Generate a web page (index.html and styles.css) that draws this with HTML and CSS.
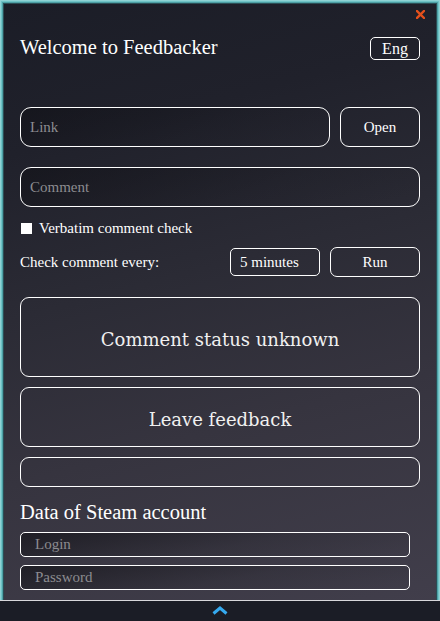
FILE: index.html
```html
<!DOCTYPE html>
<html lang="en">
<head>
<meta charset="utf-8">
<title>Feedbacker</title>
<link rel="stylesheet" href="styles.css">
</head>
<body>
<div class="window">
  <div class="close" title="Close">
    <svg width="9" height="9" viewBox="0 0 9 9"><path d="M1 1 L8 8 M8 1 L1 8" stroke="#e4501c" stroke-width="2.4" stroke-linecap="square"/></svg>
  </div>
  <div class="header">
    <h1 class="title">Welcome to Feedbacker</h1>
    <div class="btn lang">Eng</div>
  </div>
  <div class="row link-row">
    <div class="field field-link"><span class="ph">Link</span></div>
    <div class="btn btn-open">Open</div>
  </div>
  <div class="field field-comment"><span class="ph">Comment</span></div>
  <div class="check-row">
    <span class="checkbox"></span>
    <span class="check-label">Verbatim comment check</span>
  </div>
  <div class="row interval-row">
    <span class="interval-label">Check comment every:</span>
    <div class="btn select">5 minutes</div>
    <div class="btn btn-run">Run</div>
  </div>
  <div class="panel panel-status">Comment status unknown</div>
  <div class="panel panel-feedback">Leave feedback</div>
  <div class="panel panel-empty"></div>
  <h2 class="section-title">Data of Steam account</h2>
  <div class="small-field login"><span class="ph">Login</span></div>
  <div class="small-field password"><span class="ph">Password</span></div>
</div>
<div class="bottom-bar">
  <svg width="16" height="9" viewBox="0 0 16 9"><path d="M1.5 7.5 L8 2 L14.5 7.5" fill="none" stroke="#35aaf0" stroke-width="3" stroke-linejoin="miter"/></svg>
</div>
</body>
</html>
```
FILE: styles.css
```css
html, body {
  margin: 0;
  padding: 0;
}
body {
  width: 440px;
  height: 621px;
  overflow: hidden;
  background: #1b1d26;
  font-family: "Liberation Serif", "Times New Roman", serif;
  color: #ffffff;
}
.window {
  position: relative;
  height: 600px;
  box-sizing: border-box;
  padding: 0 20px;
  display: flex;
  flex-direction: column;
  background: linear-gradient(165deg, #1b1d27 0%, #20212b 22%, #2b2b35 45%, #36343f 68%, #413e4b 100%);
  box-shadow:
    inset 1px 1px 0 0 #8fd2d4,
    inset -1px 0 0 0 #8fd2d4,
    inset 2px 2px 0 0 #6ec3c6,
    inset -2px 0 0 0 #6ec3c6,
    inset 3px 3px 0 0 #4d9fa4,
    inset -3px 0 0 0 #4d9fa4,
    inset 4px 4px 0 0 #2b4e55,
    inset -4px 0 0 0 #2b4e55;
}
.close {
  position: absolute;
  top: 10px;
  left: 416px;
  width: 9px;
  height: 9px;
  line-height: 0;
}
.header {
  margin-top: 37px;
  height: 23px;
  display: flex;
  align-items: center;
  justify-content: space-between;
}
.title {
  margin: 0;
  font-size: 20.5px;
  font-weight: normal;
  line-height: 23px;
  position: relative;
  top: -1px;
}
.btn {
  box-sizing: border-box;
  border: 1px solid #ffffff;
  display: flex;
  align-items: center;
  justify-content: center;
  font-size: 15px;
  color: #ffffff;
}
.lang {
  width: 50px;
  height: 23px;
  border-radius: 5px;
  font-size: 16px;
}
.row {
  display: flex;
  align-items: center;
}
.link-row {
  margin-top: 47px;
  height: 40px;
}
.field {
  box-sizing: border-box;
  height: 40px;
  border: 1px solid #ffffff;
  border-radius: 11px;
  display: flex;
  align-items: center;
  padding-left: 9px;
  background: linear-gradient(160deg, rgba(10,10,14,0.45) 0%, rgba(20,20,26,0.2) 60%, rgba(40,40,50,0.1) 100%);
}
.field-link {
  width: 310px;
}
.ph {
  color: #8c8c90;
  font-size: 15px;
}
.btn-open {
  width: 80px;
  height: 40px;
  margin-left: 10px;
  border-radius: 9px;
}
.field-comment {
  margin-top: 20px;
}
.check-row {
  margin-top: 11px;
  height: 21px;
  display: flex;
  align-items: center;
}
.checkbox {
  width: 11px;
  height: 11px;
  background: #ffffff;
  margin-left: 1px;
  margin-right: 7px;
}
.check-label {
  font-size: 15px;
}
.interval-row {
  margin-top: 8px;
  height: 30px;
}
.interval-label {
  flex: 1;
  font-size: 15px;
}
.select {
  width: 90px;
  height: 28px;
  border-radius: 5px;
  justify-content: flex-start;
  padding-left: 9px;
}
.btn-run {
  width: 90px;
  height: 30px;
  margin-left: 10px;
  border-radius: 7px;
}
.panel {
  box-sizing: border-box;
  border: 1px solid #ffffff;
  border-radius: 9px;
  display: flex;
  align-items: center;
  justify-content: center;
  padding-top: 5px;
  font-family: "DejaVu Serif", "Liberation Serif", serif;
  font-size: 18px;
  color: #f0f0f0;
}
.panel-status {
  margin-top: 20px;
  height: 80px;
}
.panel-feedback {
  margin-top: 10px;
  height: 60px;
}
.panel-empty {
  margin-top: 10px;
  height: 30px;
}
.section-title {
  margin: 14px 0 0 0;
  font-size: 20.5px;
  font-weight: normal;
  line-height: 23px;
}
.small-field {
  box-sizing: border-box;
  width: 390px;
  height: 25px;
  border: 1px solid #ffffff;
  border-radius: 5px;
  display: flex;
  align-items: center;
  padding-left: 14px;
  background: linear-gradient(170deg, rgba(10,10,14,0.55) 0%, rgba(30,30,36,0.25) 55%, rgba(60,58,70,0.15) 100%);
}
.login {
  margin-top: 8px;
}
.password {
  margin-top: 8px;
}
.bottom-bar {
  height: 20px;
  border-top: 1px solid #d8d8dc;
  background: #1b1d26;
  display: flex;
  justify-content: center;
  align-items: center;
}
.bottom-bar svg {
  display: block;
  margin-top: -1px;
}
```
